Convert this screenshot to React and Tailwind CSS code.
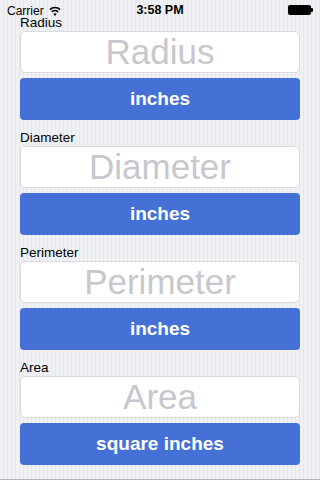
import React from "react";

const fields = [
  { label: "Radius", unit: "inches" },
  { label: "Diameter", unit: "inches" },
  { label: "Perimeter", unit: "inches" },
  { label: "Area", unit: "square inches" },
];

const WifiIcon = () => (
  <svg width="12" height="10" viewBox="0 0 12 10" className="text-black">
    <path d="M0.9 3.6 A7.2 7.2 0 0 1 11.1 3.6" fill="none" stroke="currentColor" strokeWidth="1.5" />
    <path d="M2.9 5.9 A4.4 4.4 0 0 1 9.1 5.9" fill="none" stroke="currentColor" strokeWidth="1.5" />
    <path d="M6 10 L4.3 8 A2.4 2.4 0 0 1 7.7 8 Z" fill="currentColor" />
  </svg>
);

// iOS 7 style status bar, drawn over the content
const StatusBar = () => (
  <div className="absolute inset-x-0 top-0 flex h-5 items-start justify-between px-[7px] pt-[5px] text-[12px] text-black">
    <div className="flex items-start gap-[5px] pt-px">
      <span className="leading-[10px]">Carrier</span>
      <WifiIcon />
    </div>
    <span className="absolute left-1/2 top-[5px] -translate-x-1/2 text-[12.5px] font-bold leading-[10px]">3:58 PM</span>
    <div className="flex items-center">
      <div className="h-[10px] w-[23px] rounded-[2px] bg-black" />
      <div className="h-[4px] w-[2px] rounded-r-[1px] bg-black" />
    </div>
  </div>
);

const App = () => {
  return (
    <div className="relative h-[480px] w-[320px] overflow-hidden border-b border-[#b5b5b5] bg-[repeating-linear-gradient(90deg,#eff1f5_0px,#eff1f5_3px,#e4e8ed_3px,#e4e8ed_4px)] font-['Liberation_Sans',Arial,sans-serif]">
      <StatusBar />
      <div className="flex flex-col gap-[10px] px-5 pt-[15px]">
        {fields.map((field) => (
          <div key={field.label} className="flex flex-col">
            <label className="h-4 pt-px text-[13.5px] leading-[13px] text-black">{field.label}</label>
            <input
              type="text"
              placeholder={field.label}
              className="h-[42px] w-full rounded-[5px] border border-[#dadada] bg-white text-center text-[35px] text-black outline-none placeholder:text-[#c7c7cd]"
            />
            <button className="mt-[5px] h-[42px] w-full rounded-[4px] bg-[#4570d6] text-[19px] font-bold text-white">
              {field.unit}
            </button>
          </div>
        ))}
      </div>
    </div>
  );
};

export default App;
